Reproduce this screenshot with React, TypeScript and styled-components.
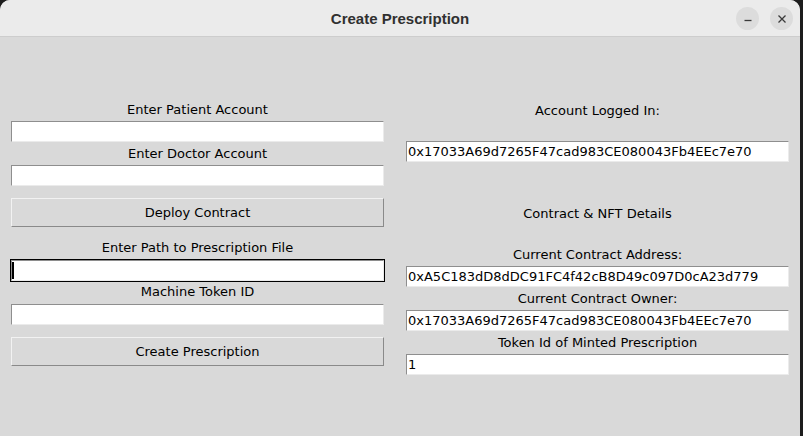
import React from 'react';
import styled, { createGlobalStyle } from 'styled-components';

const Global = createGlobalStyle`
  html, body {
    margin: 0;
    padding: 0;
    background: #1d1d1d;
    overflow: hidden;
  }
  * { box-sizing: border-box; }
`;

export default function App() {
  return (
    <>
      <Global />
      <Window>
        <TitleBar>
          <span />
          <Title>Create Prescription</Title>
          <Controls>
            <WinButton aria-label="minimize">
              <svg width="10" height="10" viewBox="0 0 10 10">
                <path d="M1.5 6.5h7" stroke="#3a3a3a" strokeWidth="1.3" />
              </svg>
            </WinButton>
            <WinButton aria-label="close">
              <svg width="10" height="10" viewBox="0 0 10 10">
                <path d="M1.5 1.5l7 7M8.5 1.5l-7 7" stroke="#3a3a3a" strokeWidth="1.3" />
              </svg>
            </WinButton>
          </Controls>
        </TitleBar>

        <Body>
          <Column>
            <Label $mt={63}>Enter Patient Account</Label>
            <Entry $mt={3} />
            <Label $mt={2}>Enter Doctor Account</Label>
            <Entry $mt={3} />
            <Button $mt={12}>Deploy Contract</Button>
            <Label $mt={11}>Enter Path to Prescription File</Label>
            <FocusRing $mt={3}>
              <Entry $mt={0}>
                <Caret />
              </Entry>
            </FocusRing>
            <Label $mt={0}>Machine Token ID</Label>
            <Entry $mt={4} />
            <Button $mt={12}>Create Prescription</Button>
          </Column>

          <Column>
            <Label $mt={64}>Account Logged In:</Label>
            <Entry $mt={22}>0x17033A69d7265F47cad983CE080043Fb4EEc7e70</Entry>
            <Label $mt={42}>Contract &amp; NFT Details</Label>
            <Label $mt={23}>Current Contract Address:</Label>
            <Entry $mt={3}>0xA5C183dD8dDC91FC4f42cB8D49c097D0cA23d779</Entry>
            <Label $mt={2}>Current Contract Owner:</Label>
            <Entry $mt={3}>0x17033A69d7265F47cad983CE080043Fb4EEc7e70</Entry>
            <Label $mt={2}>Token Id of Minted Prescription</Label>
            <Entry $mt={3}>1</Entry>
          </Column>
        </Body>
      </Window>
    </>
  );
}

const Window = styled.div`
  width: 800px;
  height: 436px;
  background: #d9d9d9;
  border-radius: 10px 10px 0 0;
  overflow: hidden;
  font-family: "DejaVu Sans", "Noto Sans", sans-serif;
  font-size: 13px;
  color: #000;
`;

const TitleBar = styled.div`
  height: 37px;
  background: #ebebeb;
  border-bottom: 1px solid #cdcdcd;
  display: grid;
  grid-template-columns: 1fr auto 1fr;
  align-items: center;
`;

const Title = styled.div`
  font-family: "Liberation Sans", Arial, sans-serif;
  font-weight: bold;
  font-size: 15px;
  color: #303030;
  padding-top: 1px;
`;

const Controls = styled.div`
  display: flex;
  justify-content: flex-end;
  gap: 11px;
  padding-right: 7px;
  padding-top: 1px;
`;

const WinButton = styled.div`
  width: 23px;
  height: 23px;
  border-radius: 50%;
  background: #dcdcdc;
  display: flex;
  align-items: center;
  justify-content: center;
`;

const Body = styled.div`
  display: grid;
  grid-template-columns: 373px 383px;
  column-gap: 22px;
  padding-left: 11px;
`;

const Column = styled.div`
  display: flex;
  flex-direction: column;
`;

const Label = styled.div<{ $mt: number }>`
  margin-top: ${p => p.$mt}px;
  height: 18px;
  line-height: 20px;
  text-align: center;
  white-space: nowrap;
`;

const Entry = styled.div<{ $mt: number }>`
  margin-top: ${p => p.$mt}px;
  height: 21px;
  background: #fff;
  border: 1px solid;
  border-color: #8e8e8e #ebebeb #ebebeb #8e8e8e;
  padding-left: 1px;
  line-height: 19px;
  white-space: nowrap;
  overflow: hidden;
  display: flex;
  align-items: center;
`;

const FocusRing = styled.div<{ $mt: number }>`
  margin: ${p => p.$mt}px -1px 0;
  border: 1px solid #000;
`;

const Caret = styled.span`
  display: block;
  width: 2px;
  height: 17px;
  margin-left: -1px;
  background: #000;
`;

const Button = styled.div<{ $mt: number }>`
  margin-top: ${p => p.$mt}px;
  height: 29px;
  background: #d9d9d9;
  border: 1px solid;
  border-color: #f2f2f2 #8a8a8a #8a8a8a #f2f2f2;
  display: flex;
  align-items: center;
  justify-content: center;
  white-space: nowrap;
`;
